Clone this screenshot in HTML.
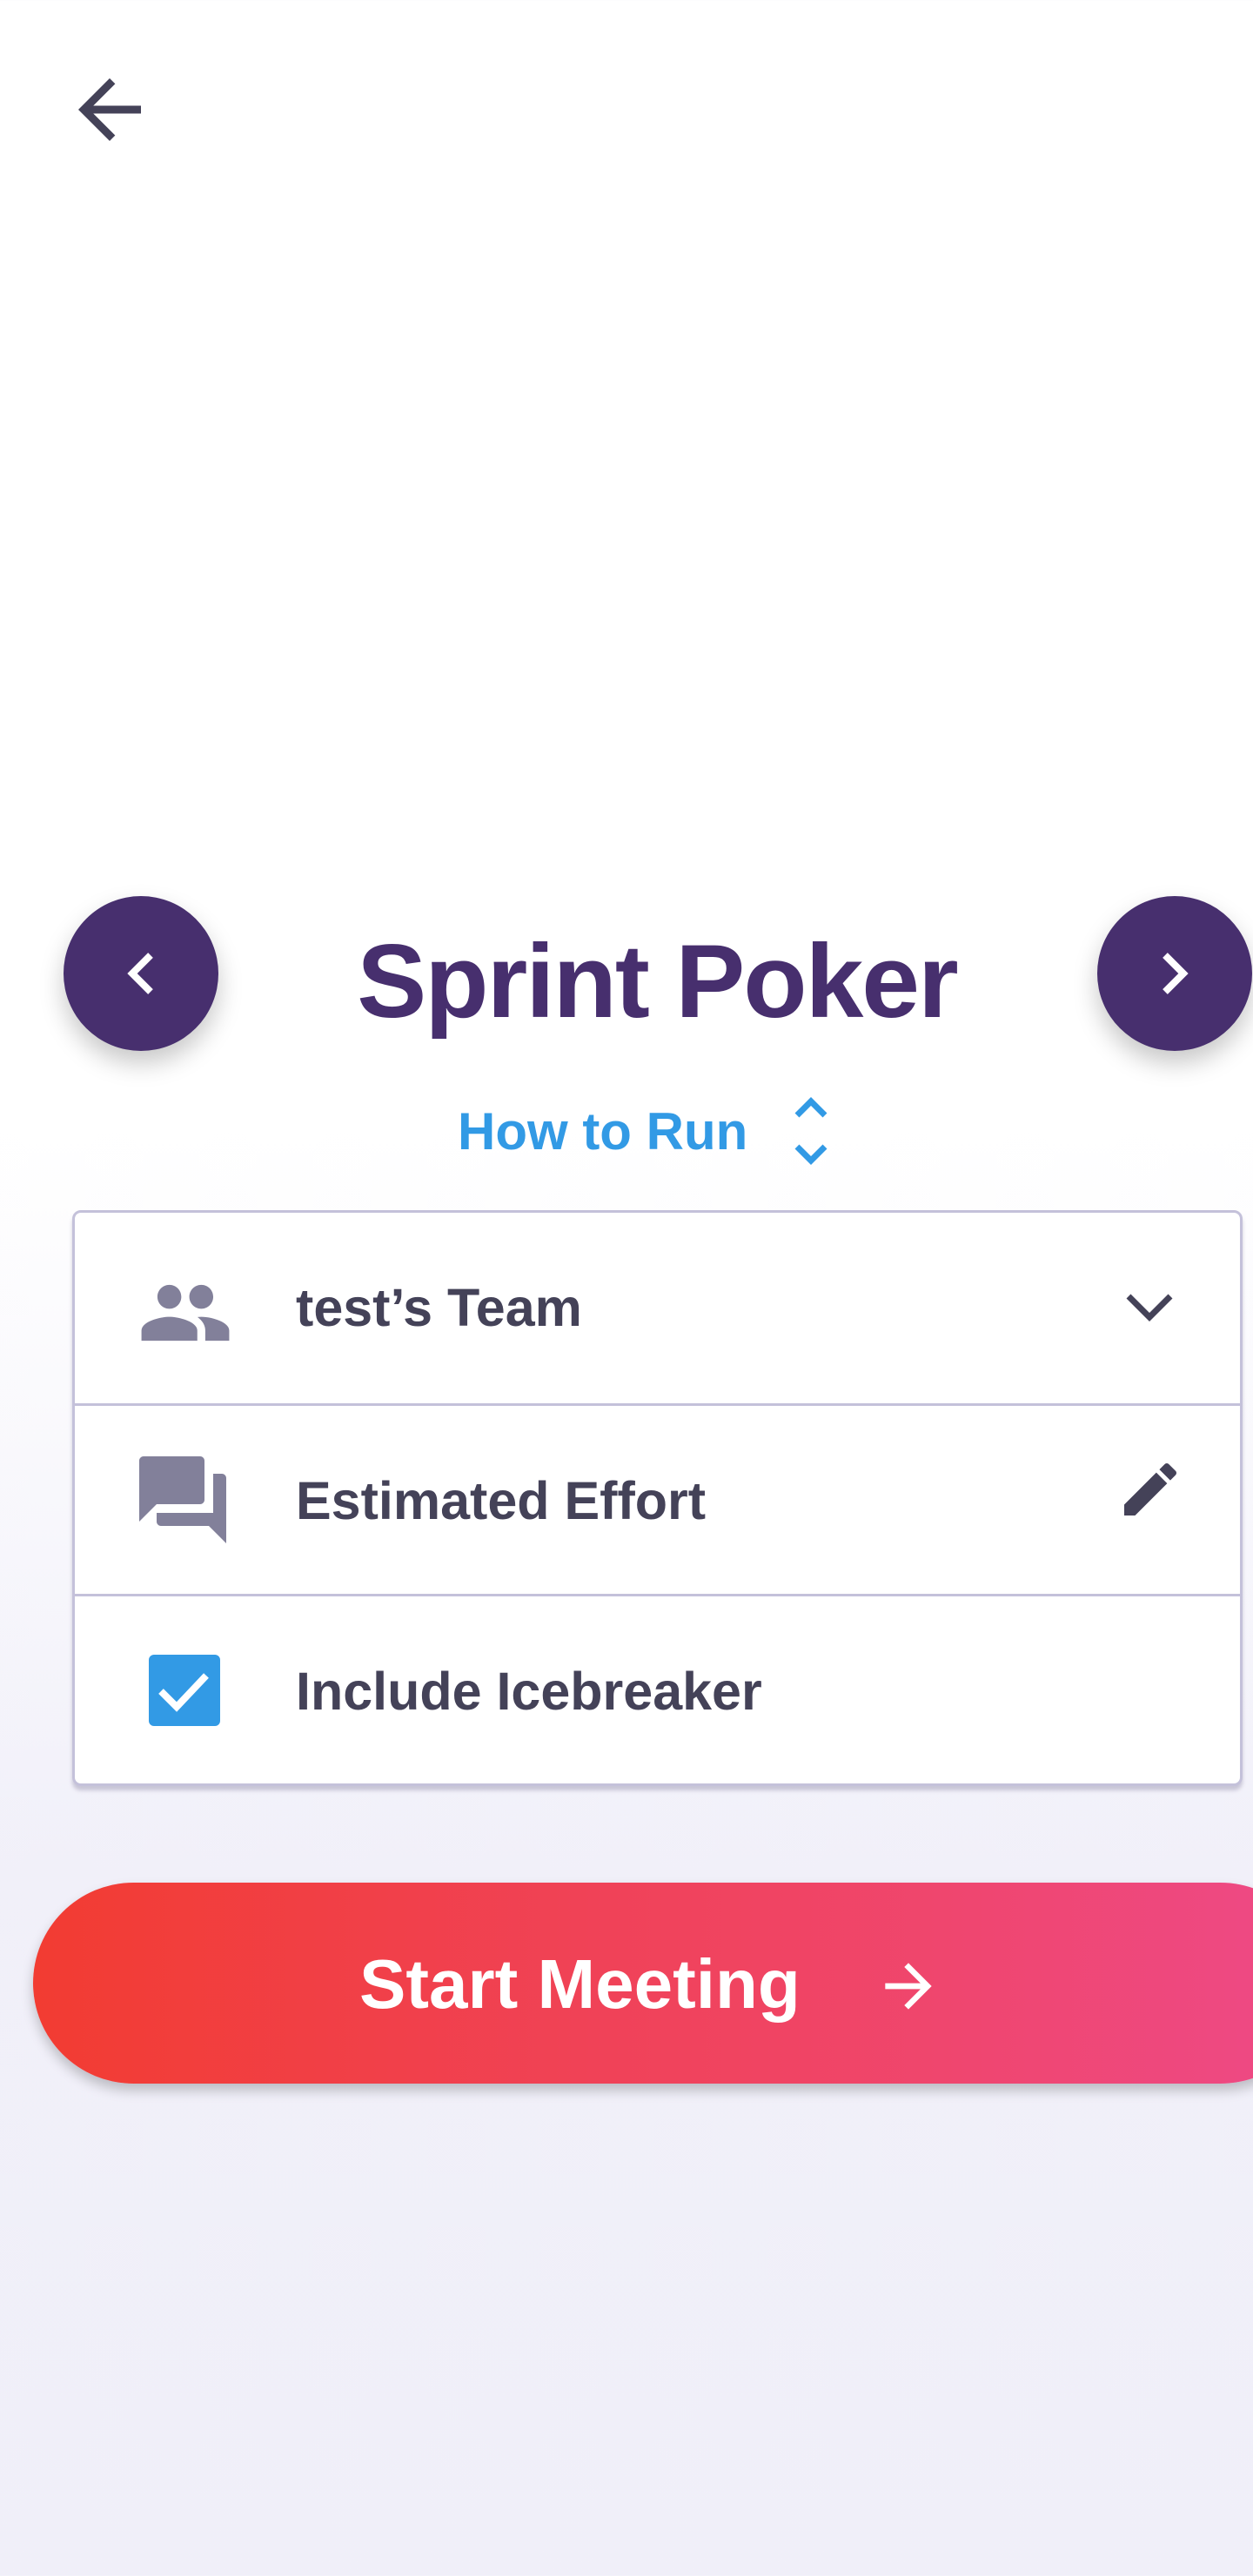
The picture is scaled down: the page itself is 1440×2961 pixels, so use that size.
<!DOCTYPE html>
<html><head><meta charset="utf-8"><style>
*{margin:0;padding:0;box-sizing:border-box}
html,body{width:1440px;height:2961px;overflow:hidden}
body{background:linear-gradient(180deg,#fff 0px,#fff 1300px,#f1f0f9 2150px,#f0eff9 2961px);font-family:"Liberation Sans",sans-serif;position:relative}
.abs{position:absolute}
.circle{width:178px;height:178px;border-radius:50%;background:#472f6e;box-shadow:0 14px 28px rgba(0,0,0,.22)}
.title{left:0;width:1510px;text-align:center;top:1053px;font-size:120px;font-weight:bold;color:#472f6e;letter-spacing:-2px;line-height:150px}
.how{left:526px;top:1266px;font-size:60px;font-weight:bold;color:#329ae5;line-height:70px}
.card{left:83px;top:1391px;width:1345px;height:662px;border:3px solid #c4c1da;border-radius:10px;background:#fff;box-shadow:0 5px 4px rgba(120,115,150,.35)}
.row{position:absolute;left:0;width:100%;height:219px}
.row+.row{border-top:3px solid #c4c1da}
.lbl{position:absolute;left:254px;top:0;line-height:219px;font-size:61px;font-weight:bold;color:#444258}
.btn{left:38px;top:2164px;width:1480px;height:231px;border-radius:116px;background:linear-gradient(90deg,#f23c32 0%,#ee4a87 100%);box-shadow:0 8px 14px rgba(0,0,0,.22)}
.btxt{left:413px;top:2236px;font-size:80px;font-weight:bold;color:#fff;line-height:90px}
</style></head><body>
<svg class="abs" style="left:72px;top:72px" width="108" height="108" viewBox="0 0 24 24"><path fill="#444258" d="M20 11H7.83l5.59-5.59L12 4l-8 8 8 8 1.41-1.41L7.83 13H20v-2z"/></svg>

<div class="abs circle" style="left:73px;top:1030px"><svg width="178" height="178" viewBox="0 0 178 178"><path d="M100 68 L79 89 L100 110" stroke="#fff" stroke-width="8" fill="none"/></svg></div>
<div class="abs circle" style="left:1261px;top:1030px"><svg width="178" height="178" viewBox="0 0 178 178"><path d="M78 68 L99 89 L78 110" stroke="#fff" stroke-width="8" fill="none"/></svg></div>
<div class="abs title">Sprint Poker</div>
<div class="abs how">How to Run</div>
<svg class="abs" style="left:906px;top:1258px" width="52" height="84" viewBox="0 0 52 84"><path d="M10 24 L26 8 L42 24 M10 60 L26 76 L42 60" stroke="#329ae5" stroke-width="7" fill="none"/></svg>

<div class="abs card">
 <div class="row" style="top:0">
  <svg class="abs" style="left:72px;top:60px" width="110" height="110" viewBox="0 0 24 24"><path fill="#82809a" d="M16 11c1.66 0 2.99-1.34 2.99-3S17.66 5 16 5c-1.66 0-3 1.34-3 3s1.34 3 3 3zm-8 0c1.66 0 2.99-1.34 2.99-3S9.66 5 8 5C6.34 5 5 6.34 5 8s1.340 3 3 3zm0 2c-2.33 0-7 1.17-7 3.5V19h14v-2.5c0-2.330-4.67-3.5-7-3.5zm8 0c-.29 0-.62.02-.97.05 1.16.84 1.97 1.97 1.97 3.45V19h6v-2.5c0-2.33-4.67-3.5-7-3.5z"/></svg>
  <div class="lbl">test’s Team</div>
  <svg class="abs" style="left:1205px;top:88px" width="60" height="40" viewBox="0 0 60 40"><path d="M6 8 L30 32 L54 8" stroke="#444258" stroke-width="7" fill="none"/></svg>
 </div>
 <div class="row" style="top:219px">
  <svg class="abs" style="left:64px;top:48px" width="120" height="120" viewBox="0 0 24 24"><path fill="#82809a" d="M21 6h-2v9H6v2c0 .55.45 1 1 1h11l4 4V7c0-.55-.45-1-1-1zm-4 6V3c0-.55-.45-1-1-1H3c-.55 0-1 .45-1 1v14l4-4h10c.55 0 1-.45 1-1z"/></svg>
  <div class="lbl">Estimated Effort</div>
  <svg class="abs" style="left:1196px;top:56px" width="80" height="80" viewBox="0 0 24 24"><path fill="#444258" d="M3 17.25V21h3.75L17.81 9.94l-3.75-3.75L3 17.25zM20.71 7.04c.39-.39.39-1.02 0-1.41l-2.34-2.34a.996.996 0 0 0-1.41 0l-1.83 1.83 3.75 3.75 1.83-1.830z"/></svg>
 </div>
 <div class="row" style="top:438px">
  <div class="abs" style="left:85px;top:67px;width:82px;height:82px;border-radius:6px;background:#329ae5"><svg width="82" height="82" viewBox="0 0 82 82"><path d="M14 42 L32 60 L66 24" stroke="#fff" stroke-width="8" fill="none"/></svg></div>
  <div class="lbl">Include Icebreaker</div>
 </div>
</div>

<div class="abs btn"></div>
<div class="abs btxt">Start Meeting</div>
<svg class="abs" style="left:1004px;top:2243px" width="80" height="80" viewBox="0 0 24 24"><path fill="#fff" d="M12 4l-1.41 1.41L16.17 11H4v2h12.17l-5.58 5.59L12 20l8-8z"/></svg>
</body></html>
